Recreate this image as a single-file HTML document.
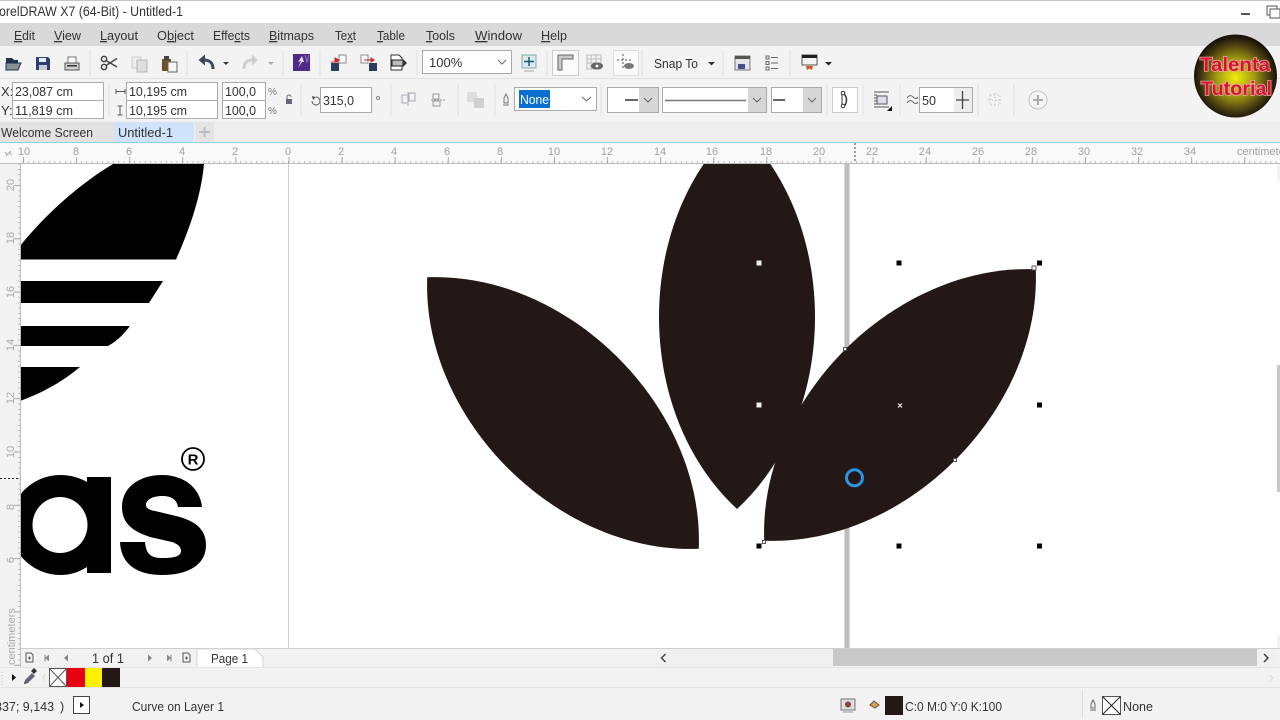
<!DOCTYPE html>
<html lang="en"><head><meta charset="utf-8"><title>CorelDRAW X7</title>
<style>
html,body{margin:0;padding:0;width:1280px;height:720px;overflow:hidden;background:#fff}
svg{display:block;filter:blur(.3px)}
text{font-family:"Liberation Sans",sans-serif;fill:#3a3a3a}
.m{font-size:13px;fill:#333}
.f{font-size:13px;fill:#333}
.rl{font-size:11px;fill:#a0a0a0;text-anchor:middle}
.rv{font-size:11px;fill:#a8a8a8;text-anchor:middle}
.sep{stroke:#e0e0e0;stroke-width:1}
.box{fill:#fff;stroke:#aaa;stroke-width:1}
.ar{fill:none;stroke:#666;stroke-width:1}
</style></head><body>
<svg width="1280" height="720" viewBox="0 0 1280 720" xmlns="http://www.w3.org/2000/svg">
<defs>
<radialGradient id="lg" cx="50%" cy="52%" r="50%"><stop offset="0" stop-color="#f0ee0c"/><stop offset=".45" stop-color="#a09a12"/><stop offset=".8" stop-color="#4a3e10"/><stop offset="1" stop-color="#1a1208"/></radialGradient>
<pattern id="th" x="288" y="0" width="5.31" height="720" patternUnits="userSpaceOnUse"><rect x="0" y="161" width="1" height="2" fill="#bbb"/></pattern>
<pattern id="thm" x="288.500" y="0" width="53.1" height="720" patternUnits="userSpaceOnUse"><rect x="0" y="157" width="1" height="6" fill="#aaa"/></pattern>
<pattern id="tv" x="0" y="185" width="720" height="5.33" patternUnits="userSpaceOnUse"><rect x="18" y="0" width="2" height="1" fill="#bbb"/></pattern>
<pattern id="tvm" x="0" y="185" width="720" height="53.3" patternUnits="userSpaceOnUse"><rect x="14" y="0" width="6" height="1" fill="#aaa"/></pattern>
<clipPath id="cv"><rect x="21" y="164" width="1256" height="484"/></clipPath>
<path id="leaf" d="M0 -192C104 -96 104 96 0 192C-104 96 -104 -96 0 -192Z"/>
</defs>

<!-- chrome backgrounds -->
<rect width="1280" height="720" fill="#f2f2f2"/>
<rect width="1280" height="23" fill="#fff"/><rect width="1280" height="1" fill="#c4c4c4"/>
<rect y="23" width="1280" height="23" fill="#d9d9d9"/>
<rect y="46" width="1280" height="32" fill="#f3f3f3"/>
<rect y="78" width="1280" height="1" fill="#e2e2e2"/>
<rect y="79" width="1280" height="43" fill="#f3f3f3"/>
<rect y="121" width="1280" height="21" fill="#eeeeee"/>

<!-- title -->
<text x="-1" y="16" font-size="13.5" textLength="184" lengthAdjust="spacingAndGlyphs" style="fill:#333">orelDRAW X7 (64-Bit) - Untitled-1</text>
<rect x="1241" y="13" width="9" height="2" fill="#555"/>
<rect x="1267" y="6" width="10" height="9" fill="none" stroke="#555"/><rect x="1270" y="9" width="10" height="9" fill="#fff" stroke="#555"/>

<!-- menu -->
<g class="menu">
<text class="m" x="14" y="40" textLength="21" lengthAdjust="spacingAndGlyphs"><tspan text-decoration="underline">E</tspan>dit</text>
<text class="m" x="54" y="40" textLength="27" lengthAdjust="spacingAndGlyphs"><tspan text-decoration="underline">V</tspan>iew</text>
<text class="m" x="100" y="40" textLength="38" lengthAdjust="spacingAndGlyphs"><tspan text-decoration="underline">L</tspan>ayout</text>
<text class="m" x="157" y="40" textLength="37" lengthAdjust="spacingAndGlyphs">O<tspan text-decoration="underline">b</tspan>ject</text>
<text class="m" x="213" y="40" textLength="37" lengthAdjust="spacingAndGlyphs">Effe<tspan text-decoration="underline">c</tspan>ts</text>
<text class="m" x="269" y="40" textLength="45" lengthAdjust="spacingAndGlyphs"><tspan text-decoration="underline">B</tspan>itmaps</text>
<text class="m" x="335" y="40" textLength="21" lengthAdjust="spacingAndGlyphs">Te<tspan text-decoration="underline">x</tspan>t</text>
<text class="m" x="377" y="40" textLength="28" lengthAdjust="spacingAndGlyphs"><tspan text-decoration="underline">T</tspan>able</text>
<text class="m" x="426" y="40" textLength="29" lengthAdjust="spacingAndGlyphs"><tspan text-decoration="underline">T</tspan>ools</text>
<text class="m" x="475" y="40" textLength="47" lengthAdjust="spacingAndGlyphs"><tspan text-decoration="underline">W</tspan>indow</text>
<text class="m" x="541" y="40" textLength="26" lengthAdjust="spacingAndGlyphs"><tspan text-decoration="underline">H</tspan>elp</text>
</g>

<!-- toolbar separators -->
<g class="sep">
<path d="M90 50V76M187 50V76M283 50V76M320 50V76M417 50V76M547 50V76M642 50V76M723 50V76M790 50V76"/>
<path d="M109 84V116M301 84V116M391 84V116M458 84V116M495 84V116M601 84V116M827 84V116M863 84V116M900 84V116M978 84V116M1014 84V116"/>
</g>

<!-- standard toolbar icons -->
<path d="M6 58h6l2 2h4v3H6z" fill="#1f3350"/><path d="M6 63h15l-3 7H6z" fill="#8a9097" stroke="#1f3350" stroke-width="1"/>
<path d="M36 57h12l2 2v11H36z" fill="#2c3e74"/><rect x="39" y="58" width="7" height="4" fill="#eef"/><rect x="39" y="65" width="8" height="5" fill="#c8ccd8"/>
<rect x="68" y="57" width="8" height="7" fill="#fff" stroke="#777"/><rect x="65" y="63" width="14" height="7" fill="#d0d0d0" stroke="#555"/><rect x="67" y="65" width="10" height="1.5" fill="#333"/>
<g fill="none" stroke="#444" stroke-width="1.5"><circle cx="104" cy="59" r="2.6"/><circle cx="104" cy="67" r="2.6"/><path d="M106 60.5L117 67M106 65.5L117 58.5"/></g>
<rect x="132" y="57" width="9" height="11" fill="#eee" stroke="#ccc"/><rect x="137" y="60" width="10" height="12" fill="#ddd" stroke="#b5b5b5"/>
<rect x="162" y="59" width="9" height="12" fill="#6a5226"/><rect x="164" y="56" width="5" height="4" fill="#444"/><rect x="168" y="62" width="9" height="10" fill="#f4f4f4" stroke="#666"/>
<path d="M213 69C213 62 209 60 203 60" fill="none" stroke="#3b4a5a" stroke-width="3"/><path d="M205 54.5L198.5 60L205 65.5z" fill="#3b4a5a"/>
<path d="M223 62h6l-3 3z" fill="#333"/>
<path d="M244 69C244 62 248 60 252 60" fill="none" stroke="#cfcfcf" stroke-width="3"/><path d="M252 54.5L258 60L252 65.5z" fill="#cfcfcf"/>
<path d="M268 62h6l-3 3z" fill="#aaa"/>
<rect x="293" y="54" width="17" height="17" fill="#4f2a86"/><path d="M298 68l3-7-3 1 4-6 2 6h-2z" fill="#ddd"/><path d="M305 55l2 7 2-7" stroke="#9a78c0" fill="none"/>
<rect x="331" y="63" width="8" height="8" fill="#2c3e60"/><rect x="339" y="55" width="7" height="8" fill="#fff" stroke="#888"/><path d="M331 62h8M339 60l-4-2v4z" stroke="#c22" fill="#c22"/>
<rect x="369" y="63" width="8" height="8" fill="#2c3e60"/><rect x="361" y="55" width="7" height="8" fill="#fff" stroke="#888"/><path d="M364 60h10M374 60l-3-2v4z" stroke="#c22" fill="#c22"/>
<path d="M391 55h8l3 3v12h-11z" fill="#fff" stroke="#333"/><rect x="392" y="60" width="11" height="6" fill="#bbb" stroke="#222"/><path d="M403 59l4 4-4 4z" fill="#333"/>

<rect class="box" x="422.5" y="50.5" width="89" height="23"/>
<text x="429" y="67" font-size="13" style="fill:#333">100%</text>
<path class="ar" d="M498 60l4 4 4-4"/>
<rect x="522" y="55" width="14" height="13" fill="#dce8ee" stroke="#8aa"/><path d="M529 57v9M524 61.5h10" stroke="#185a78" stroke-width="1.5"/><path d="M524 71h10" stroke="#aaa"/>

<rect x="552.5" y="50.5" width="26" height="25" fill="#fafafa" stroke="#ccc"/>
<path d="M558 55h15v4h-11v11h-4z" fill="#c8c8c8" stroke="#666"/>
<path d="M587 55h14v14h-14z" fill="none" stroke="#bbb"/><path d="M587 59h14M587 63h14M591 55v14M596 55v14" stroke="#bbb"/><ellipse cx="597" cy="66" rx="6" ry="3.5" fill="#666"/><circle cx="597" cy="66" r="1.4" fill="#fff"/>
<rect x="613.5" y="50.5" width="25" height="25" fill="#fafafa" stroke="#ddd"/>
<path d="M617 60h14M623 54v16" stroke="#555" stroke-dasharray="2 2"/><ellipse cx="629" cy="66" rx="5" ry="3" fill="#777"/>
<text x="654" y="68" font-size="13" textLength="44" lengthAdjust="spacingAndGlyphs" style="fill:#333">Snap To</text>
<path d="M708 62h7l-3.5 3.5z" fill="#333"/>
<rect x="735" y="56" width="15" height="14" fill="#e4e4ea" stroke="#777"/><rect x="735" y="56" width="15" height="3" fill="#555"/><rect x="738" y="64" width="7" height="5" fill="#45508a"/>
<g stroke="#666" fill="none"><rect x="766" y="56" width="3" height="3"/><rect x="766" y="61.5" width="3" height="3"/><rect x="766" y="67" width="3" height="3"/><path d="M771 57.5h7M771 63h7M771 68.5h7"/></g>
<rect x="802" y="55" width="15" height="10" fill="#f4f4f4" stroke="#555"/><rect x="802" y="55" width="15" height="3" fill="#222"/><path d="M806 66h7l-1 4-2.500-1.500-2.500 1.500z" fill="#d8562a"/>
<path d="M825 62h7l-3.500 3.500z" fill="#222"/>

<!-- property bar -->
<text class="f" x="1" y="96" font-size="13">X:</text><text class="f" x="1" y="115" font-size="13">Y:</text>
<rect class="box" x="12.500" y="82.500" width="91" height="18"/><rect class="box" x="12.500" y="100.500" width="91" height="18"/>
<text class="f" x="15" y="96" textLength="58" lengthAdjust="spacingAndGlyphs">23,087 cm</text><text class="f" x="15" y="115" textLength="58" lengthAdjust="spacingAndGlyphs">11,819 cm</text>
<path d="M116 91.500h9M116 89v5M125 89v5" stroke="#555" fill="none"/><path d="M120 106v9M117.500 106h5M117.500 115h5" stroke="#555" fill="none"/>
<rect class="box" x="126.500" y="82.500" width="91" height="18"/><rect class="box" x="126.500" y="100.500" width="91" height="18"/>
<text class="f" x="129" y="96" textLength="58" lengthAdjust="spacingAndGlyphs">10,195 cm</text><text class="f" x="129" y="115" textLength="58" lengthAdjust="spacingAndGlyphs">10,195 cm</text>
<rect class="box" x="222.500" y="82.500" width="43" height="18"/><rect class="box" x="222.500" y="100.500" width="43" height="18"/>
<text class="f" x="225" y="96" textLength="31" lengthAdjust="spacingAndGlyphs">100,0</text><text class="f" x="225" y="115" textLength="31" lengthAdjust="spacingAndGlyphs">100,0</text>
<text x="268" y="95" font-size="10" style="fill:#777">%</text><text x="268" y="114" font-size="10" style="fill:#777">%</text>
<rect x="286" y="99" width="6" height="5" fill="#667"/><path d="M287 99v-2a2 2 0 0 1 4 0" fill="none" stroke="#667"/>
<path d="M316 97a4 4 0 1 1-4 4" fill="none" stroke="#555"/><path d="M312 96l4 1-3 3z" fill="#555"/>
<rect class="box" x="320.500" y="87.500" width="51" height="25"/><text class="f" x="323" y="105" textLength="31" lengthAdjust="spacingAndGlyphs">315,0</text>
<circle cx="378" cy="98" r="1.500" fill="none" stroke="#888"/>
<g fill="none" stroke="#aab" stroke-width="1"><rect x="402" y="95" width="6" height="8"/><rect x="409" y="93" width="6" height="8"/><path d="M408 92v15" stroke-dasharray="2 1"/></g>
<g fill="none" stroke="#999" stroke-width="1"><rect x="433" y="94" width="6" height="5"/><rect x="433" y="101" width="7" height="5"/><path d="M431 100h14" stroke-dasharray="2 1"/></g>
<rect x="467" y="92" width="10" height="10" fill="#ddd"/><rect x="474" y="98" width="10" height="10" fill="#d0d0d0"/>
<path d="M506 94l2 4v5h-4v-5zM503 105h6" fill="none" stroke="#777"/>
<rect class="box" x="514.500" y="87.500" width="82" height="23"/><rect x="519" y="90" width="31" height="18" fill="#0a6fce"/>
<text x="520" y="104" font-size="13" style="fill:#fff" textLength="29" lengthAdjust="spacingAndGlyphs">None</text>
<path class="ar" d="M582 97l4.500 4 4.500-4"/>
<rect class="box" x="607.500" y="87.500" width="51" height="25"/><rect x="639" y="88" width="19" height="24" fill="#d6d6d6"/><path d="M625 100h13" stroke="#333" stroke-width="1.500"/><path class="ar" d="M644 98l4 4 4-4"/>
<rect class="box" x="662.500" y="87.500" width="104" height="25"/><rect x="748" y="88" width="18" height="24" fill="#d6d6d6"/><path d="M665 100.500h81" stroke="#777" stroke-width="1.500"/><path class="ar" d="M753 98l4 4 4-4"/>
<rect class="box" x="771.500" y="87.500" width="50" height="25"/><rect x="803" y="88" width="18" height="24" fill="#d6d6d6"/><path d="M773 100h12" stroke="#333" stroke-width="1.500"/><path class="ar" d="M808 98l4 4 4-4"/>
<rect x="832.500" y="87.500" width="25" height="25" fill="#fff" stroke="#ccc"/>
<path d="M842 93c6 1 6 13 0 14" fill="none" stroke="#333" stroke-width="1.500"/><path d="M842 93v14" stroke="#333"/><circle cx="843" cy="93" r="1.800" fill="#fff" stroke="#333"/><circle cx="843" cy="106" r="1.800" fill="#fff" stroke="#333"/>
<g stroke="#555" fill="none"><rect x="877" y="96" width="10" height="8" fill="#dde"/><path d="M874 92h15M874 95h3M874 98h3M874 101h3M874 104h3M874 107h15"/></g><path d="M887 111l5-5v5z" fill="#111"/>
<path d="M907 98c2-3 4-3 6-1s4 2 5 0M907 103c2-3 4-3 6-1s4 2 5 0" fill="none" stroke="#666"/>
<rect class="box" x="919.500" y="87.500" width="53" height="25"/><rect x="954" y="88" width="18" height="24" fill="#eee"/>
<text class="f" x="922" y="105" textLength="14" lengthAdjust="spacingAndGlyphs">50</text><path d="M956 100h13M962.500 91v18" stroke="#444" stroke-width="1.300"/>
<g fill="none" stroke="#c4c4c4" stroke-dasharray="1.500 2"><rect x="990" y="95" width="10" height="10"/><path d="M995 93v14M988 100h14"/></g>
<circle cx="1038" cy="100" r="9" fill="#f4f4f4" stroke="#c4c4c4"/><path d="M1033 100h10M1038 95v10" stroke="#aaa" stroke-width="2"/>

<!-- tabs -->
<rect x="0" y="122" width="114" height="20" fill="#e2e2e2"/>
<rect x="114" y="122" width="80" height="20" fill="#cfe4fb"/>
<rect x="195" y="122" width="19" height="20" fill="#e4e4e4"/>
<text x="1" y="137" font-size="13" textLength="92" lengthAdjust="spacingAndGlyphs" style="fill:#333">Welcome Screen</text>
<text x="118" y="137" font-size="13" textLength="55" lengthAdjust="spacingAndGlyphs" style="fill:#333">Untitled-1</text>
<path d="M199 132h11M204.500 127v10" stroke="#bbb" stroke-width="2"/>
<rect y="142" width="1280" height="1" fill="#8fd0e6"/>

<!-- rulers -->
<rect y="143" width="1280" height="21" fill="#f9f9f9"/>
<rect x="20" y="143" width="1260" height="20" fill="url(#th)"/>
<rect x="20" y="143" width="1260" height="20" fill="url(#thm)"/>
<rect y="163" width="1280" height="1" fill="#bdbdbd"/>
<rect y="164" width="21" height="503" fill="#f3f3f3"/>
<rect y="164" width="20" height="503" fill="url(#tv)"/>
<rect y="164" width="20" height="503" fill="url(#tvm)"/>
<rect x="20" y="164" width="1" height="503" fill="#bdbdbd"/>
<g class="r">
<text class="rl" x="24" y="155">10</text><text class="rl" x="76" y="155">8</text><text class="rl" x="129" y="155">6</text><text class="rl" x="182" y="155">4</text><text class="rl" x="235" y="155">2</text><text class="rl" x="288" y="155">0</text><text class="rl" x="341" y="155">2</text><text class="rl" x="394" y="155">4</text><text class="rl" x="447" y="155">6</text><text class="rl" x="500" y="155">8</text><text class="rl" x="554" y="155">10</text><text class="rl" x="607" y="155">12</text><text class="rl" x="660" y="155">14</text><text class="rl" x="712" y="155">16</text><text class="rl" x="766" y="155">18</text><text class="rl" x="819" y="155">20</text><text class="rl" x="872" y="155">22</text><text class="rl" x="925" y="155">24</text><text class="rl" x="978" y="155">26</text><text class="rl" x="1031" y="155">28</text><text class="rl" x="1084" y="155">30</text><text class="rl" x="1137" y="155">32</text><text class="rl" x="1190" y="155">34</text>
<text x="1237" y="155" font-size="11" style="fill:#a0a0a0">centimeters</text>
</g>
<g>
<text class="rv" transform="translate(14 185) rotate(-90)">20</text><text class="rv" transform="translate(14 238) rotate(-90)">18</text><text class="rv" transform="translate(14 292) rotate(-90)">16</text><text class="rv" transform="translate(14 345) rotate(-90)">14</text><text class="rv" transform="translate(14 398) rotate(-90)">12</text><text class="rv" transform="translate(14 452) rotate(-90)">10</text><text class="rv" transform="translate(14 507) rotate(-90)">8</text><text class="rv" transform="translate(14 560) rotate(-90)">6</text>
<text transform="translate(15 665) rotate(-90)" font-size="11" style="fill:#a8a8a8">centimeters</text>
</g>
<path d="M5 152l3 3M9 152l3 3M6 156l5-5" stroke="#aaa" fill="none"/>
<path d="M855 143v20" stroke="#444" stroke-dasharray="2 2"/>
<path d="M0 478.500h20" stroke="#222" stroke-dasharray="2 2"/>

<!-- canvas -->
<rect x="21" y="164" width="1256" height="484" fill="#fff"/>
<rect x="288" y="164" width="1" height="484" fill="#cfcfcf"/>
<rect x="844.500" y="164" width="5" height="484" fill="#bdbdbd"/>
<g clip-path="url(#cv)">
<g fill="#000">
<path d="M20 246C45 215 78 185 113 164H204C201 196 190 228 176 259.500H20Z"/>
<path d="M20 281H163L149 303H20Z"/>
<path d="M20 326H130C123 335 117 341 108 346H20Z"/>
<path d="M20 367H80C62 382 42 393 20 401Z"/>
<path fill-rule="evenodd" d="M87 482V477H111V573H87V567C79 572 71 575 60 575C35 575 10 555 10 525C10 495 35 475 60 475C71 475 80 478 87 482ZM60 497A27.500 28 0 1 0 60 553A27.500 28 0 1 0 60 497Z"/>
<path d="M202 507C200 487 183 475 162 475C140 475 122 487 122 507C122 525 135 532 150 537L172 542C178 544 181 547 181 551C181 557 172 558 162 558C152 558 146 555 145 542L120 542C121 565 138 575 162 575C188 575 206 565 206 545C206 527 192 520 176 516L155 511C149 510 146 508 146 505C146 499 154 496 162 496C172 496 177 500 178 507Z"/>
</g>
<circle cx="193" cy="459" r="11" fill="#fff" stroke="#000" stroke-width="1.800"/>
<text x="193" y="464.500" font-size="15" font-weight="bold" text-anchor="middle" style="fill:#000">R</text>
<g fill="#231815">
<use href="#leaf" transform="translate(563 413) rotate(-45)"/>
<use href="#leaf" transform="translate(737 317)"/>
<use href="#leaf" transform="translate(900 405) rotate(45)"/>
</g>
</g>
<!-- selection handles -->
<g fill="#000">
<rect x="756.500" y="543.500" width="5" height="5"/><rect x="896.500" y="260.500" width="5" height="5"/><rect x="1037" y="260.500" width="5" height="5"/><rect x="1037" y="402.500" width="5" height="5"/><rect x="896.500" y="543.500" width="5" height="5"/><rect x="1037" y="543.500" width="5" height="5"/>
</g>
<rect x="756.500" y="260.500" width="5" height="5" fill="#eee"/><rect x="756.500" y="402.500" width="5" height="5" fill="#eee"/>
<path d="M898 403.500l4 4M902 403.500l-4 4" stroke="#eee" stroke-width="1.200"/>
<g fill="#fff" stroke="#555"><rect x="843.500" y="347.500" width="3" height="3"/><rect x="953.500" y="458.500" width="3" height="3"/><rect x="762.500" y="540.500" width="3" height="3"/><rect x="1032" y="266" width="4" height="4"/></g>
<circle cx="854.500" cy="477.800" r="8" fill="none" stroke="#2a93e3" stroke-width="3"/>

<!-- right scrollbar -->
<rect x="1277" y="164" width="3" height="484" fill="#fff"/>
<rect x="1277" y="164" width="3" height="18" fill="#f2f2f2"/><rect x="1277" y="635" width="3" height="13" fill="#f2f2f2"/>
<rect x="1277" y="365" width="3" height="127" fill="#c8c8c8"/>

<!-- page nav -->
<rect x="21" y="648" width="1259" height="1" fill="#cfcfcf"/>
<rect x="21" y="649" width="1259" height="18" fill="#f2f2f2"/>
<rect y="667" width="1280" height="1" fill="#e4e4e4"/>
<g fill="none" stroke="#555"><path d="M26 653h5l2 2v7h-7zM28 658h3M29.500 656.500v3"/><path d="M183 653h5l2 2v7h-7zM185 658h3M186.500 656.500v3"/></g>
<path d="M45 658l4-3.500v7zM64 658l4-3.500v7zM148 654.500l4 3.500-4 3.500zM167 654.500l4 3.500-4 3.500z" fill="#888"/><path d="M45 654.500v7M171 654.500v7" stroke="#888"/>
<text x="92" y="663" font-size="13.500" textLength="32" lengthAdjust="spacingAndGlyphs" style="fill:#333">1 of 1</text>
<path d="M197 667V649H255L263 657V667" fill="#fff" stroke="#d4d4d4"/>
<text x="211" y="663" font-size="13" textLength="37" lengthAdjust="spacingAndGlyphs" style="fill:#333">Page 1</text>
<rect x="655" y="649" width="622" height="17" fill="#f0f0f0"/>
<path d="M665.500 654l-4 4 4 4M1264 654l4 4-4 4" fill="none" stroke="#444" stroke-width="1.500"/>
<rect x="833" y="649" width="424" height="17" fill="#c9c9c9"/>

<!-- palette -->
<path d="M2 672v14" stroke="#bbb" stroke-dasharray="1 2"/>
<path d="M12 674l4 3.500-4 3.500z" fill="#111"/>
<path d="M24 684l4-1 7-7-3-3-7 7z" fill="#667"/><path d="M31 671l3-3 3 3-3 3z" fill="#333"/><path d="M24 684l1-2 2 1z" fill="#334"/>
<path d="M45 674l-2 3.500 2 3.500" stroke="#ddd" fill="none"/>
<rect x="49.500" y="668.500" width="17" height="18" fill="#fff" stroke="#555"/><path d="M49.500 668.500l17 18M66.500 668.500l-17 18" stroke="#555"/>
<rect x="67" y="668" width="18" height="19" fill="#e60012"/><rect x="85" y="668" width="17" height="19" fill="#fff100"/><rect x="102" y="668" width="18" height="19" fill="#231815"/>
<rect y="687" width="1280" height="1" fill="#e2e2e2"/>
<path d="M1270 675l3 3-3 3" stroke="#ddd" fill="none"/>

<!-- status bar -->
<text x="-5" y="711" font-size="12.500" style="fill:#333">337; 9,143</text>
<text x="60" y="711" font-size="12.500" style="fill:#333">)</text>
<rect x="73.500" y="696.500" width="16" height="17" fill="#fff" stroke="#444"/><path d="M80 702l4 3-4 3z" fill="#111"/>
<text x="132" y="711" font-size="13" textLength="92" lengthAdjust="spacingAndGlyphs" style="fill:#333">Curve on Layer 1</text>
<rect x="841" y="699" width="14" height="11" fill="#ddd" stroke="#777"/><circle cx="848" cy="704.500" r="2.500" fill="#a33" stroke="#555"/><path d="M843 712h10" stroke="#999"/>
<path d="M870 705l4-4 5 4-4 3z" fill="#e6a040" stroke="#555"/>
<rect x="885" y="696" width="18" height="19" fill="#231815"/>
<text x="905" y="711" font-size="13" textLength="97" lengthAdjust="spacingAndGlyphs" style="fill:#333">C:0 M:0 Y:0 K:100</text>
<path d="M1082.500 690v28" stroke="#ddd"/>
<path d="M1093 700l2 4v4h-4v-4zM1090 710h6" fill="none" stroke="#666"/>
<rect x="1102.500" y="696.500" width="18" height="18" fill="#fff" stroke="#555"/><path d="M1102.500 696.500l18 18M1120.500 696.500l-18 18" stroke="#222"/>
<text x="1123" y="711" font-size="13" textLength="30" lengthAdjust="spacingAndGlyphs" style="fill:#333">None</text>

<!-- logo -->
<circle cx="1235.500" cy="76" r="41.500" fill="url(#lg)"/>
<text x="1200" y="71" font-size="19" font-weight="bold" textLength="70" lengthAdjust="spacingAndGlyphs" stroke="#f0a8a8" stroke-width="1.500" style="fill:#d3152d;paint-order:stroke">Talenta</text>
<text x="1201" y="95" font-size="19" font-weight="bold" textLength="71" lengthAdjust="spacingAndGlyphs" stroke="#f0a8a8" stroke-width="1.500" style="fill:#d3152d;paint-order:stroke">Tutorial</text>
</svg>
</body></html>
